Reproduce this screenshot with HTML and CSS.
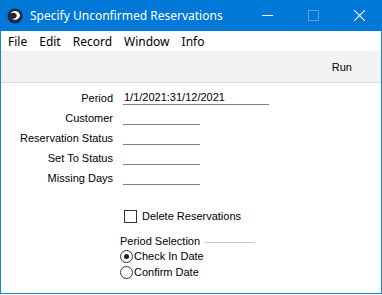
FILE: index.html
```html
<!DOCTYPE html>
<html lang="en">
<head>
    <meta charset="UTF-8">
    <title>Specify Unconfirmed Reservations</title>
    <link rel="stylesheet" href="styles.css">
</head>
<body>
    <div class="window">
        <div class="titlebar">
            <svg class="app-icon" width="16" height="16" viewBox="0 0 16 16">
                <circle cx="8" cy="8" r="7.5" fill="#1d2a3a"/>
                <path d="M3 6 C5 2, 12 2, 13 7 C13 11, 8 13, 5 11 C9 11, 11 8, 9 6 C7 4, 4 5, 3 6 Z" fill="#ffffff"/>
            </svg>
            <span class="title">Specify Unconfirmed Reservations</span>
            <div class="win-buttons">
                <span class="win-btn">
                    <svg width="11" height="11" viewBox="0 0 11 11"><path d="M0 5.5 H11" stroke="#fff" stroke-width="1"/></svg>
                </span>
                <span class="win-btn">
                    <svg width="11" height="11" viewBox="0 0 11 11"><rect x="0.5" y="0.5" width="10" height="10" fill="none" stroke="#5aa3e6" stroke-width="1"/></svg>
                </span>
                <span class="win-btn">
                    <svg width="11" height="11" viewBox="0 0 11 11"><path d="M0 0 L11 11 M11 0 L0 11" stroke="#fff" stroke-width="1.1"/></svg>
                </span>
            </div>
        </div>

        <div class="menubar">
            <span>File</span>
            <span>Edit</span>
            <span>Record</span>
            <span>Window</span>
            <span>Info</span>
        </div>

        <div class="toolbar">
            <span class="run">Run</span>
        </div>

        <div class="content">
            <div class="fields">
                <div class="row">
                    <label>Period</label>
                    <span class="field wide">1/1/2021:31/12/2021</span>
                </div>
                <div class="row">
                    <label>Customer</label>
                    <span class="field"></span>
                </div>
                <div class="row">
                    <label>Reservation Status</label>
                    <span class="field"></span>
                </div>
                <div class="row">
                    <label>Set To Status</label>
                    <span class="field"></span>
                </div>
                <div class="row">
                    <label>Missing Days</label>
                    <span class="field"></span>
                </div>
            </div>

            <div class="options">
                <div class="check">
                    <span class="box"></span>
                    <span>Delete Reservations</span>
                </div>

                <div class="group-title">
                    <span>Period Selection</span>
                    <span class="group-line"></span>
                </div>
                <div class="radio">
                    <span class="circle on"></span>
                    <span>Check In Date</span>
                </div>
                <div class="radio">
                    <span class="circle"></span>
                    <span>Confirm Date</span>
                </div>
            </div>
        </div>
    </div>
</body>
</html>
```

FILE: styles.css
```css
body {
    margin: 0;
    font-family: "Liberation Sans", Arial, sans-serif;
    font-size: 11px;
    color: #000;
    background: #fff;
}

.window {
    width: 380px;
    height: 293px;
    border: 1px solid #1883d7;
    border-top: none;
    display: flex;
    flex-direction: column;
    background: #fff;
}

/* Title bar */
.titlebar {
    height: 31px;
    background: #0078d7;
    color: #fff;
    display: flex;
    align-items: center;
    padding-left: 7px;
    margin: 0 -1px;
}

.app-icon {
    flex: none;
}

.title {
    margin-left: 7px;
    font-family: "Noto Sans", "Open Sans", sans-serif;
    font-size: 12px;
    flex: 1;
}

.win-buttons {
    display: flex;
    height: 100%;
}

.win-btn {
    width: 46px;
    display: flex;
    align-items: center;
    justify-content: center;
}

/* Menu */
.menubar {
    height: 20px;
    display: flex;
    align-items: center;
    padding-left: 7px;
    font-family: "Noto Sans", "Open Sans", sans-serif;
    font-size: 12px;
}

.menubar span {
    margin-right: 12px;
}

/* Toolbar */
.toolbar {
    height: 31px;
    background: #f2f2f2;
    border-bottom: 1px solid #dcdcdc;
    display: flex;
    align-items: center;
    justify-content: flex-end;
    padding-right: 29px;
}

/* Form */
.content {
    padding-top: 4px;
}

.row {
    display: flex;
    align-items: flex-end;
    height: 20px;
}

.row label {
    width: 112px;
    text-align: right;
    padding-bottom: 3px;
}

.field {
    margin-left: 10px;
    width: 76px;
    height: 14px;
    border-bottom: 1px solid #808080;
    padding-left: 1px;
    line-height: 14px;
    margin-bottom: 2px;
}

.field.wide {
    width: 145px;
}

.options {
    margin-left: 119px;
    margin-top: 21px;
}

.check {
    display: flex;
    align-items: center;
    gap: 5px;
    margin-left: 4px;
    height: 16px;
}

.box {
    width: 11px;
    height: 11px;
    border: 1px solid #333;
    background: #fff;
}

.group-title {
    display: flex;
    align-items: center;
    margin-top: 9px;
    height: 15px;
}

.group-line {
    width: 50px;
    height: 0;
    border-top: 1px solid #c8c8c8;
    margin-left: 5px;
    margin-top: 4px;
}

.radio {
    display: flex;
    align-items: center;
    gap: 1px;
    height: 16px;
}

.circle {
    width: 11px;
    height: 11px;
    border: 1px solid #333;
    border-radius: 50%;
    position: relative;
}

.circle.on::after {
    content: "";
    position: absolute;
    left: 3px;
    top: 3px;
    width: 5px;
    height: 5px;
    border-radius: 50%;
    background: #222;
}
```
